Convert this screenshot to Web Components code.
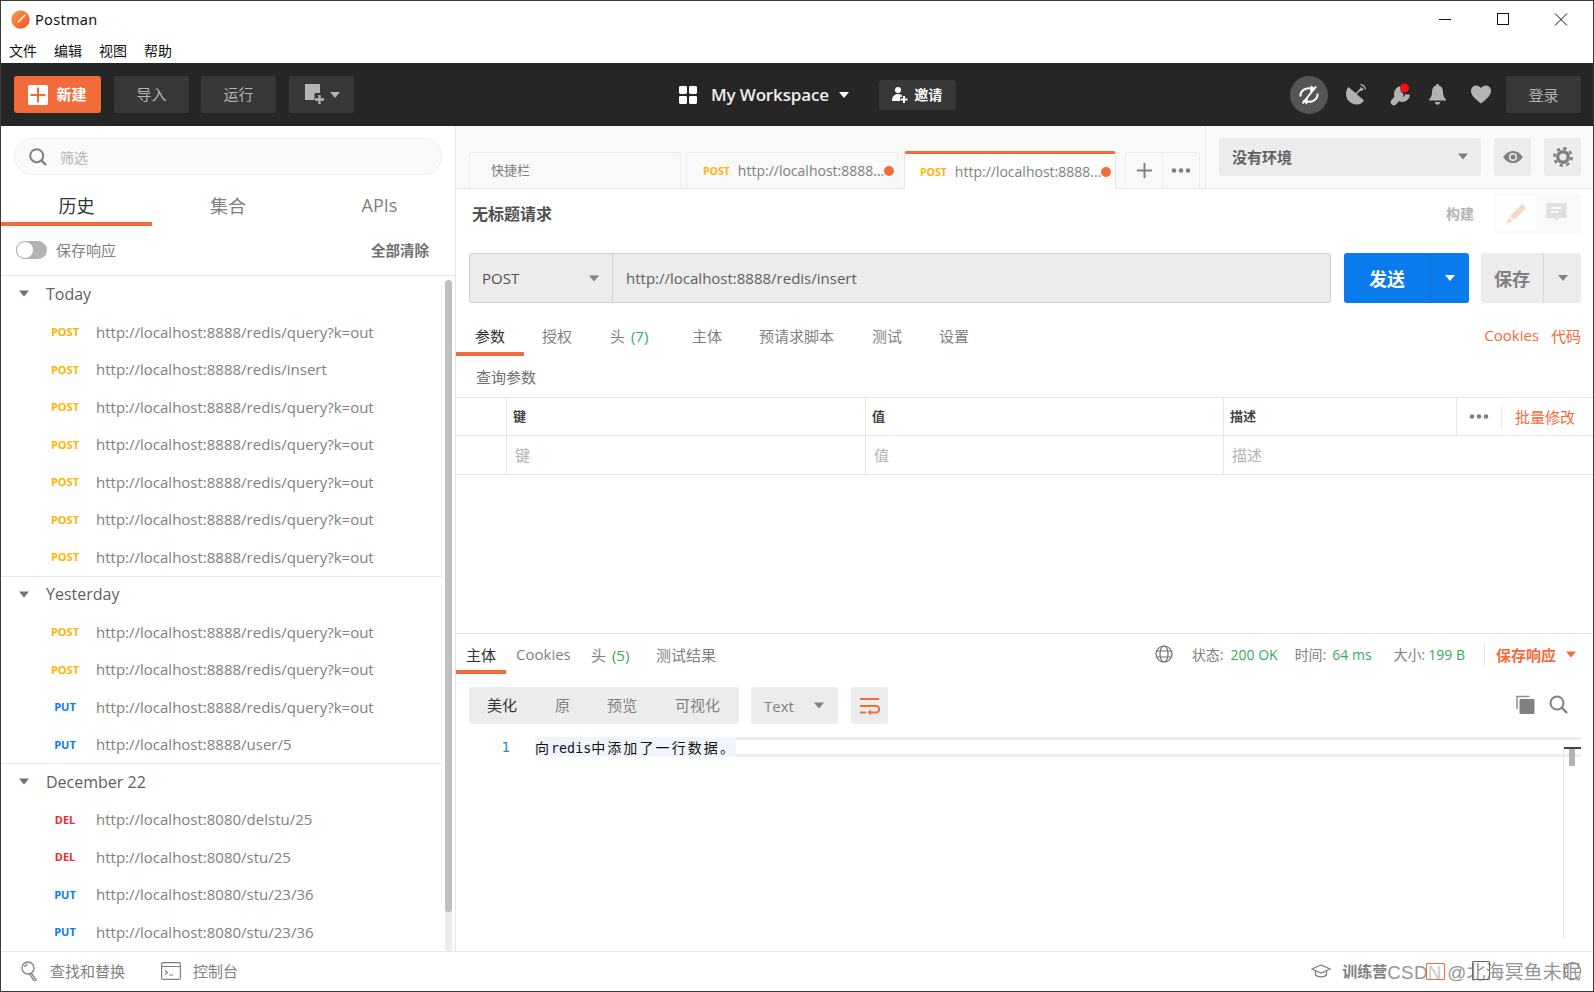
<!DOCTYPE html>
<html lang="zh">
<head>
<meta charset="utf-8">
<title>Postman</title>
<style>
  html, body { margin: 0; padding: 0; background: #fff; }
  body { font-family: "Open Sans", "Noto Sans CJK SC", sans-serif; }
</style>
</head>
<body>
<pm-window>
  <pm-titlebar slot="top"></pm-titlebar>
  <pm-toolbar slot="top"></pm-toolbar>
  <pm-sidebar slot="side">
    <pm-history-group label="Today" first>
      <pm-history-row method="POST">http://localhost:8888/redis/query?k=out</pm-history-row>
      <pm-history-row method="POST">http://localhost:8888/redis/insert</pm-history-row>
      <pm-history-row method="POST">http://localhost:8888/redis/query?k=out</pm-history-row>
      <pm-history-row method="POST">http://localhost:8888/redis/query?k=out</pm-history-row>
      <pm-history-row method="POST">http://localhost:8888/redis/query?k=out</pm-history-row>
      <pm-history-row method="POST">http://localhost:8888/redis/query?k=out</pm-history-row>
      <pm-history-row method="POST">http://localhost:8888/redis/query?k=out</pm-history-row>
    </pm-history-group>
    <pm-history-group label="Yesterday">
      <pm-history-row method="POST">http://localhost:8888/redis/query?k=out</pm-history-row>
      <pm-history-row method="POST">http://localhost:8888/redis/query?k=out</pm-history-row>
      <pm-history-row method="PUT">http://localhost:8888/redis/query?k=out</pm-history-row>
      <pm-history-row method="PUT">http://localhost:8888/user/5</pm-history-row>
    </pm-history-group>
    <pm-history-group label="December 22" last>
      <pm-history-row method="DEL">http://localhost:8080/delstu/25</pm-history-row>
      <pm-history-row method="DEL">http://localhost:8080/stu/25</pm-history-row>
      <pm-history-row method="PUT">http://localhost:8080/stu/23/36</pm-history-row>
      <pm-history-row method="PUT">http://localhost:8080/stu/23/36</pm-history-row>
    </pm-history-group>
  </pm-sidebar>
  <pm-tabstrip slot="main"></pm-tabstrip>
  <pm-request slot="main"></pm-request>
  <pm-response slot="main"></pm-response>
  <pm-statusbar slot="bottom"></pm-statusbar>
</pm-window>

<script>
// all elements share the same small base: markup + style into an open shadow root
class PmElement extends HTMLElement {
  constructor() {
    super();
    this.attachShadow({ mode: "open" });
  }
  connectedCallback() {
    this.shadowRoot.innerHTML = `<style>${this.styles()}</style>${this.markup()}`;
  }
  styles() { return ""; }
  markup() { return ""; }
}

const CARET = (color, w = 12, h = 7) =>
  `<svg width="${w}" height="${h}" viewBox="0 0 12 7" style="display:block;flex:none"><path d="M0 0h12L6 7z" fill="${color}"/></svg>`;

class PmWindow extends PmElement {
  styles() {
    return `
      :host { display: flex; flex-direction: column; width: 1594px; height: 992px; box-sizing: border-box;
        border: 1px solid #3a3a3a; overflow: hidden; background: #fff; }
      .mid { flex: 1; display: flex; min-height: 0; }
      .main { flex: 1; min-width: 0; display: flex; flex-direction: column; }
    `;
  }
  markup() {
    return `<slot name="top"></slot>
      <div class="mid"><slot name="side"></slot><div class="main"><slot name="main"></slot></div></div>
      <slot name="bottom"></slot>`;
  }
}

class PmTitlebar extends PmElement {
  styles() {
    return `
      :host { display: block; background: #fff; color: #111; height: 62px; }
      .title { height: 36px; display: flex; align-items: center; padding-left: 10px; font-size: 14.5px; font-family: "Noto Sans", sans-serif; }
      .title span { margin-left: 5px; letter-spacing: .3px; }
      .ctl { margin-left: auto; margin-right: 3px; display: flex; align-items: center; }
      .ctl svg { display: block; width: 58px; height: 36px; }
      .menu { height: 26px; display: flex; gap: 17px; padding-left: 8px; font-size: 14px; line-height: 26px; font-family: "Noto Sans CJK SC", sans-serif; }
    `;
  }
  markup() {
    return `<div class="title">
        <svg width="19" height="19" viewBox="0 0 19 19">
          <defs><linearGradient id="lg" x1="0" y1="0" x2="1" y2="1"><stop offset="0" stop-color="#f8a04a"/><stop offset="1" stop-color="#ef4f26"/></linearGradient></defs>
          <circle cx="9.5" cy="9.5" r="9.2" fill="url(#lg)"/>
          <path d="M13.8 4.2l1 1-6.6 6.8-2 1 1-2.1z" fill="#fff"/>
        </svg>
        <span>Postman</span>
        <div class="ctl">
          <svg viewBox="0 0 58 36"><path d="M23 18.5h12" stroke="#111" stroke-width="1"/></svg>
          <svg viewBox="0 0 58 36"><rect x="23.5" y="12.5" width="11" height="11" fill="none" stroke="#111"/></svg>
          <svg viewBox="0 0 58 36"><path d="M23 12.5l12 12M35 12.5l-12 12" stroke="#111" fill="none"/></svg>
        </div>
      </div>
      <div class="menu"><span>文件</span><span>编辑</span><span>视图</span><span>帮助</span></div>`;
  }
}

class PmToolbar extends PmElement {
  styles() {
    return `
      :host { display: flex; align-items: center; height: 63px; background: #262626; box-sizing: border-box; padding: 0 12px 0 13px;
        font-family: "Open Sans", "Noto Sans CJK SC", sans-serif; font-size: 15px; color: #b3b3b3; }
      .btn { height: 37px; background: #383838; border-radius: 3px; display: flex; align-items: center; justify-content: center; box-sizing: border-box; flex: none; }
      .btn span, .plain { line-height: 35px; }
      .new { width: 87px; background: #f26b3a; color: #fff; font-weight: 700; gap: 8px; margin-right: 13px; }
      .plain { width: 75px; margin-right: 12px; }
      .add { width: 65px; gap: 5px; margin-left: 1px; }
      .ws { margin-left: 325px; display: flex; align-items: center; color: #eee; font-size: 17px; font-weight: 600; letter-spacing: -.15px; }
      .ws .t { margin: 0 10px 0 14px; }
      .invite { margin-left: 30px; width: 77px; height: 30px; color: #fff; font-weight: 700; gap: 6px; font-size: 14px; }
      .right { margin-left: auto; display: flex; align-items: center; }
      .sync { width: 38px; height: 38px; border-radius: 50%; background: #555; display: flex; align-items: center; justify-content: center; margin-right: 18px; }
      .ic { display: block; flex: none; }
      .login { width: 75px; margin-left: 15px; }
    `;
  }
  markup() {
    return `
      <div class="btn new"><svg class="ic" width="20" height="20" viewBox="0 0 20 20"><rect width="20" height="20" rx="2" fill="#fff"/><path d="M10 2.5v15M2.5 10h15" stroke="#f26b3a" stroke-width="2.2"/></svg><span>新建</span></div>
      <div class="btn plain">导入</div>
      <div class="btn plain">运行</div>
      <div class="btn add">
        <svg class="ic" width="21" height="21" viewBox="0 0 21 21"><path d="M1 0h15v9h-5.500v7H1z" fill="#b3b3b3"/><path d="M15.500 11v9M11 15.500h9" stroke="#b3b3b3" stroke-width="2.400"/></svg>
        ${CARET("#b3b3b3", 10, 6)}
      </div>
      <div class="ws">
        <svg class="ic" width="18" height="18" viewBox="0 0 18 18" fill="#fff"><rect width="8" height="8" rx="1.4"/><rect x="10" width="8" height="8" rx="1.4"/><rect y="10" width="8" height="8" rx="1.4"/><rect x="10" y="10" width="8" height="8" rx="1.4"/></svg>
        <span class="t">My Workspace</span>
        ${CARET("#fff", 10, 6)}
      </div>
      <div class="btn invite">
        <svg class="ic" width="16" height="17" viewBox="0 0 16 17" fill="#fff"><circle cx="6" cy="4" r="3"/><path d="M0 15c0-5 3-7 6-7 2 0 3 .7 4 1.600V11H8v4z"/><path d="M12 10v7M8.500 13.500h7" stroke="#fff" stroke-width="2"/></svg>
        <span>邀请</span>
      </div>
      <div class="right">
        <div class="sync">
          <svg class="ic" width="20" height="20" viewBox="0 0 20 20" fill="none" stroke="#fff" stroke-width="2">
            <path d="M1.500 11.500C1 6 6.500 2 12.500 3.500"/><path d="M18.500 8.500C19 14 13.500 18 7.500 16.500"/>
            <path d="M12 .2l4.500 4L11 7z" fill="#fff" stroke="none"/><path d="M8 19.800l-4.500-4L9 13z" fill="#fff" stroke="none"/>
            <path d="M3.500 18.500L17 1.500" stroke-width="2"/>
          </svg>
        </div>
        <svg class="ic" width="20" height="21" viewBox="0 0 20 21" style="margin-right:24px" fill="#b3b3b3">
          <path d="M2.500 3L18 16.500A8.800 8.800 0 0 1 11 20.500C5 20.500 0 16 0 10c0-2.700.8-5 2.500-7z"/>
          <path d="M9 11l6-6" stroke="#b3b3b3" stroke-width="1.500"/>
          <path d="M14.500 3.500a3 3 0 0 1 2.500 2.500M14.500 .7a6 6 0 0 1 5 5" stroke="#b3b3b3" stroke-width="1.200" fill="none"/>
          <circle cx="15" cy="5.500" r="1.500"/>
        </svg>
        <svg class="ic" width="21" height="23" viewBox="0 0 21 23" style="margin-right:18px" fill="none">
          <path d="M4 19l6-7" stroke="#b3b3b3" stroke-width="6.500" stroke-linecap="round"/>
          <path d="M17.500 11.500A5.500 5.500 0 1 1 11 5.500" stroke="#b3b3b3" stroke-width="5"/>
          <circle cx="14.500" cy="5" r="4.500" fill="#f01212"/>
        </svg>
        <svg class="ic" width="17" height="21" viewBox="0 0 17 21" style="margin-right:25px" fill="#b3b3b3">
          <path d="M8.500 0c1 0 1.500.7 1.500 1.600C13 2.500 14 5 14 8c0 3.500 1 5.500 3 7.500v1H0v-1C2 13.500 3 11.500 3 8c0-3 1-5.500 4-6.400C7 .7 7.500 0 8.500 0z"/>
          <path d="M6 18h5c0 1.500-1 2.800-2.500 2.800S6 19.500 6 18z"/>
        </svg>
        <svg class="ic" width="20" height="19" viewBox="0 0 21 19" fill="#b3b3b3">
          <path d="M10.500 19C6 15 0 11 0 5.700 0 2.500 2.400 0 5.500 0c2 0 3.800 1 5 2.800C11.700 1 13.500 0 15.500 0 18.600 0 21 2.500 21 5.700 21 11 15 15 10.500 19z"/>
        </svg>
        <div class="btn login">登录</div>
      </div>`;
  }
}

class PmSidebar extends PmElement {
  styles() {
    return `
      :host { display: block; position: relative; width: 455px; flex: none; box-sizing: border-box; border-right: 1px solid #e6e6e6; background: #fff; overflow: hidden;
        font-family: "Open Sans", "Noto Sans CJK SC", sans-serif; }
      .search { margin: 12px 13px 0 13px; height: 37px; width: 428px; box-sizing: border-box; border: 1px solid #ececec; border-radius: 19px; background: #fafafa;
        display: flex; align-items: center; padding-left: 14px; gap: 13px; font-size: 14px; color: #b3b3b3; }
      .tabs { display: grid; grid-template-columns: 151px 152px 151px; height: 52px; font-size: 18px; color: #808080; }
      .tabs div { display: flex; align-items: center; justify-content: center; padding-top: 8px; box-sizing: border-box; height: 51px; }
      .tabs .on { color: #333; border-bottom: 4px solid #f26b3a; padding-top: 12px; }
      .opts { height: 50px; margin-top: -1px; box-sizing: border-box; border-bottom: 1px solid #e6e6e6; display: flex; align-items: center; padding: 0 26px 2px 15px; font-size: 15px; color: #808080; }
      .tgl { width: 31px; height: 18px; border-radius: 9px; background: #b3b3b3; box-sizing: border-box; margin-right: 9px; position: relative; }
      .tgl i { position: absolute; left: 1px; top: 1px; width: 16px; height: 16px; border-radius: 50%; background: #fff; box-shadow: 0 0 0 1px #b3b3b3; }
      .clear { margin-left: auto; font-weight: 600; font-size: 14.500px; color: #707070; }
      .bar { position: absolute; right: 3px; top: 154px; width: 7px; height: 671px; background: #ececec; border-radius: 3px; overflow: hidden; }
      .bar i { display: block; height: 632px; background: #c0c0c0; border-radius: 3px; }
    `;
  }
  markup() {
    return `
      <div class="search">
        <svg width="18" height="18" viewBox="0 0 18 18" fill="none" stroke="#808080" stroke-width="2"><circle cx="7.700" cy="7.700" r="6.500"/><path d="M12.500 12.500l4.500 4.500" stroke-width="2.400"/></svg>
        <span>筛选</span>
      </div>
      <div class="tabs"><div class="on">历史</div><div>集合</div><div>APIs</div></div>
      <div class="opts"><span class="tgl"><i></i></span><span>保存响应</span><span class="clear">全部清除</span></div>
      <slot></slot>
      <div class="bar"><i></i></div>`;
  }
}

class PmHistoryGroup extends PmElement {
  styles() {
    return `
      :host { display: block; width: 441px; }
      .wrap { border-bottom: 1px solid #e6e6e6; }
      :host([last]) .wrap { border-bottom: 0; }
      .head { height: 36.250px; padding-bottom: 1px; box-sizing: border-box; display: flex; align-items: center; padding-left: 18px; gap: 17px; font-size: 16px; color: #606060; }
      :host([first]) .head { height: 37px; padding-bottom: 2px; }
      :host([last]) .head { height: 36.750px; }
    `;
  }
  markup() {
    return `<div class="wrap"><div class="head">${CARET("#707070", 10, 7)}<span>${this.getAttribute("label")}</span></div><slot></slot></div>`;
  }
}

class PmHistoryRow extends PmElement {
  styles() {
    return `
      :host { display: flex; align-items: center; height: 37.500px; font-size: 15px; color: #808080; white-space: nowrap; }
      .m { width: 95px; flex: none; padding: 0 2px 0 35px; box-sizing: border-box; text-align: center; font-size: 11px; font-weight: 700; }
      .POST { color: #ffb400; } .PUT { color: #097bed; } .DEL { color: #ed2a2a; }
    `;
  }
  markup() {
    const method = this.getAttribute("method");
    return `<span class="m ${method}">${method}</span><slot></slot>`;
  }
}

class PmTabstrip extends PmElement {
  styles() {
    return `
      :host { display: flex; align-items: flex-end; height: 63px; flex: none; box-sizing: border-box; background: #f9f9f9; border-bottom: 1px solid #e6e6e6; padding-left: 13px;
        font-family: "Open Sans", "Noto Sans CJK SC", sans-serif; font-size: 14px; color: #808080; position: relative; }
      .tab { height: 37px; margin-bottom: -1px; box-sizing: border-box; border: 1px solid #ededed; border-bottom: 1px solid #e6e6e6; border-radius: 3px 3px 0 0; display: flex; align-items: center; margin-right: 6px; white-space: nowrap; }
      .first { width: 212px; padding: 0 0 2px 21px; font-size: 13px; margin-right: 5px; }
      .req { width: 212px; padding-left: 16px; }
      .req b { font-size: 10.500px; color: #ffb400; margin-right: 8px; font-weight: 700; }
      .req .dot { width: 10px; height: 10px; border-radius: 50%; background: #f26b3a; margin-left: auto; margin-right: 5px; flex: none; }
      .on { background: #fff; border: 0; border-top: 3px solid #f26b3a; border-left: 1px solid #e6e6e6; border-right: 1px solid #e6e6e6; height: 38px; padding-left: 15px; }
      .acts { height: 37px; margin-bottom: -1px; margin-left: 3px; box-sizing: border-box; border: 1px solid #ededed; border-radius: 3px 3px 0 0; display: flex; width: 75px; }
      .acts div { flex: 1; display: flex; align-items: center; justify-content: center; }
      .acts div + div { border-left: 1px solid #ededed; }
      .env { margin-left: auto; height: 62px; width: 388px; flex: none; box-sizing: border-box; border-left: 1px solid #e6e6e6; padding: 12px 12px 0 13px; display: flex; align-self: flex-start; }
      .sel { width: 262px; height: 38px; box-sizing: border-box; background: #ececec; border-radius: 3px; display: flex; align-items: center; padding: 0 13px 2px; font-weight: 700; font-size: 15px; color: #606060; }
      .sel svg { margin-left: auto; }
      .sq { width: 37px; height: 38px; background: #ececec; border-radius: 3px; margin-left: 13px; display: flex; align-items: center; justify-content: center; flex: none; }
    `;
  }
  markup() {
    return `
      <div class="tab first">快捷栏</div>
      <div class="tab req"><b>POST</b><span>http://localhost:8888...</span><i class="dot"></i></div>
      <div class="tab req on"><b>POST</b><span>http://localhost:8888...</span><i class="dot"></i></div>
      <div class="acts">
        <div><svg width="15" height="15" viewBox="0 0 15 15"><path d="M7.500 0v15M0 7.500h15" stroke="#808080" stroke-width="2"/></svg></div>
        <div><svg width="20" height="5" viewBox="0 0 20 5" fill="#808080"><circle cx="3" cy="2.500" r="2.300"/><circle cx="10" cy="2.500" r="2.300"/><circle cx="17" cy="2.500" r="2.300"/></svg></div>
      </div>
      <div class="env">
        <div class="sel"><span>没有环境</span>${CARET("#808080", 10, 7)}</div>
        <div class="sq"><svg width="20" height="12" viewBox="0 0 20 12"><path d="M0 6C3 2 6 0 10 0s7 2 10 6c-3 4-6 6-10 6S3 10 0 6z" fill="#808080"/><circle cx="10" cy="6" r="4" fill="#ececec"/><circle cx="10" cy="6" r="2.500" fill="#808080"/></svg></div>
        <div class="sq"><svg width="20" height="20" viewBox="0 0 20 20"><circle cx="10" cy="10" r="8.600" fill="none" stroke="#808080" stroke-width="2.600" stroke-dasharray="3.400 3.350"/><circle cx="10" cy="10" r="5.300" fill="none" stroke="#808080" stroke-width="3.400"/></svg></div>
      </div>`;
  }
}

class PmRequest extends PmElement {
  styles() {
    return `
      :host { display: block; height: 444px; flex: none; box-sizing: border-box; font-family: "Open Sans", "Noto Sans CJK SC", sans-serif; font-size: 15px; color: #808080; }
      .name { height: 48px; display: flex; align-items: center; padding: 0 12px 0 16px; }
      .name b { font-size: 16px; font-weight: 600; color: #505050; }
      .build { margin-left: auto; font-size: 14px; font-weight: 700; color: #b3b3b3; margin-right: 20px; }
      .seg { width: 87px; height: 40px; background: #f9f9f9; border-radius: 3px; display: flex; box-sizing: border-box; padding: 3px 2px; }
      .seg div { width: 40px; height: 35px; display: flex; align-items: center; justify-content: center; border-radius: 3px; }
      .seg .w { background: #fff; }
      .url { display: flex; height: 50px; margin: 16px 12px 0 13px; }
      .in { flex: none; width: 862px; box-sizing: border-box; border: 1px solid #d0d0d0; border-radius: 3px; background: #ececec; display: flex; align-items: center; color: #505050; }
      .meth { width: 143px; height: 100%; box-sizing: border-box; border-right: 1px solid #d0d0d0; display: flex; align-items: center; padding: 0 13px 0 12px; }
      .meth svg { margin-left: auto; }
      .addr { padding-left: 13px; color: #606060; }
      .send { width: 125px; margin-left: 13px; background: #097bed; border-radius: 3px; display: flex; color: #fff; font-weight: 700; font-size: 18px; }
      .send .l { width: 86px; display: flex; align-items: center; justify-content: center; }
      .send .r { flex: 1; border-left: 1px solid #0a6dcf; display: flex; align-items: center; justify-content: center; }
      .save { width: 100px; margin-left: 12px; background: #ececec; border-radius: 3px; display: flex; color: #808080; font-weight: 700; font-size: 18px; }
      .save .l { width: 62px; display: flex; align-items: center; justify-content: center; }
      .save .r { flex: 1; border-left: 1px solid #d8d8d8; display: flex; align-items: center; justify-content: center; }
      .tabs { position: relative; display: flex; height: 38px; margin-top: 14px; align-items: center; }
      .tabs span { position: absolute; top: 8px; white-space: nowrap; }
      .tabs .on { color: #333; }
      .tabs u { position: absolute; left: 0; bottom: -1px; width: 68px; height: 4px; background: #f26b3a; }
      .tabs em { font-style: normal; color: #3aa85f; margin-left: 2px; }
      .links { margin-left: auto; color: #f26b3a; display: flex; gap: 12px; padding-right: 12px; padding-bottom: 1px; }
      .q { height: 42px; line-height: 44px; padding-left: 20px; color: #707070; }
      .tbl { border-top: 1px solid #e6e6e6; }
      .tr { display: grid; grid-template-columns: 50px 359px 358px 233px 1fr; border-bottom: 1px solid #e6e6e6; height: 38px; font-size: 13px; }
      .tr > div { display: flex; align-items: center; padding-left: 6px; border-left: 1px solid #e6e6e6; }
      .tr > div:first-child { border-left: 0; }
      .head { height: 37px; color: #404040; font-weight: 600; }
      .head > div { padding-bottom: 3px; box-sizing: border-box; }
      .ph { color: #b3b3b3; font-size: 15px; }
      .ph > div { padding: 0 0 2px 8px; box-sizing: border-box; }
      .tr > div.x { padding: 0; }
      .dots { width: 44px; display: flex; justify-content: center; align-items: center; height: 100%; }
      .bulk { color: #f26b3a; font-size: 15px; font-weight: 400; padding-left: 13px; border-left: 1px solid #ededed; line-height: 24px; }
    `;
  }
  markup() {
    return `
      <div class="name"><b>无标题请求</b><span class="build">构建</span>
        <div class="seg">
          <div class="w"><svg width="21" height="21" viewBox="0 0 21 21" fill="#fad6c8"><path d="M16 1l4 4L8 17l-4-4z"/><path d="M3 14.500l3.500 3.500L0 20.500z"/></svg></div>
          <div><svg width="21" height="21" viewBox="0 0 21 21"><path d="M.5 0h20v15h-7l-3 3-3-3h-7z" fill="#e0e0e0"/><path d="M5 5h11M5 9h7" stroke="#f9f9f9" stroke-width="2"/></svg></div>
        </div>
      </div>
      <div class="url">
        <div class="in"><div class="meth"><span>POST</span>${CARET("#808080", 10, 7)}</div><div class="addr">http://localhost:8888/redis/insert</div></div>
        <div class="send"><div class="l">发送</div><div class="r">${CARET("#fff", 10, 6)}</div></div>
        <div class="save"><div class="l">保存</div><div class="r">${CARET("#808080", 10, 6)}</div></div>
      </div>
      <div class="tabs">
        <span class="on" style="left:19px">参数</span><span style="left:86px">授权</span><span style="left:154px">头 <em>(7)</em></span>
        <span style="left:236px">主体</span><span style="left:303px">预请求脚本</span><span style="left:416px">测试</span><span style="left:483px">设置</span>
        <u></u>
        <div class="links"><a>Cookies</a><a>代码</a></div>
      </div>
      <div class="q">查询参数</div>
      <div class="tbl">
        <div class="tr head"><div></div><div>键</div><div>值</div><div>描述</div>
          <div class="x"><div class="dots"><svg width="20" height="5" viewBox="0 0 20 5" fill="#808080"><circle cx="3" cy="2.500" r="2.300"/><circle cx="10" cy="2.500" r="2.300"/><circle cx="17" cy="2.500" r="2.300"/></svg></div><span class="bulk">批量修改</span></div>
        </div>
        <div class="tr ph"><div></div><div>键</div><div>值</div><div>描述</div><div style="border-left:0"></div></div>
      </div>`;
  }
}

class PmResponse extends PmElement {
  styles() {
    return `
      :host { display: block; flex: 1; min-height: 0; position: relative; box-sizing: border-box; border-top: 1px solid #e6e6e6; font-family: "Open Sans", "Noto Sans CJK SC", sans-serif; font-size: 15px; color: #808080; }
      .bar { display: flex; height: 40px; position: relative; align-items: center; }
      .tabs { display: flex; align-items: center; height: 100%; position: relative; width: 600px; }
      .tabs span { position: absolute; top: 10px; white-space: nowrap; }
      .tabs .on { color: #333; }
      .tabs u { position: absolute; left: 0; bottom: 0; width: 50px; height: 4px; background: #f26b3a; }
      em { font-style: normal; color: #3aa85f; }
      .tabs em { margin-left: 2px; }
      .meta { margin-left: auto; display: flex; align-items: center; padding-right: 17px; font-size: 14px; height: 100%; }
      .meta .k { margin-right: 6px; }
      .meta em { margin-right: 19px; font-size: 14px; }
      .save { border-left: 1px solid #e6e6e6; height: 24px; padding-left: 11px; display: flex; align-items: center; gap: 10px; color: #f26b3a; font-weight: 700; font-size: 15px; }
      .globe { margin-right: 19px; }
      .tools { display: flex; height: 38px; margin: 13px 0 0 13px; align-items: stretch; }
      .g { background: #ececec; border-radius: 3px; display: flex; align-items: center; }
      .fmt { width: 270px; position: relative; height: 37px; }
      .fmt span { position: absolute; top: 7px; white-space: nowrap; }
      .type { width: 87px; margin-left: 12px; height: 37px; padding: 0 14px 0 13px; box-sizing: border-box; }
      .type svg { margin-left: auto; }
      .wrap { width: 37px; height: 37px; margin-left: 13px; justify-content: center; }
      .side { margin-left: auto; display: flex; gap: 14px; padding: 8px 25px 0 0; }
      .code { display: flex; position: relative; height: 20px; margin-top: 12px; margin-right: 12px; align-items: stretch; }
      .num { width: 79px; box-sizing: border-box; text-align: right; padding-right: 25px; color: #2c8ac4; font: 14px/20px "DejaVu Sans Mono", monospace; flex: none; }
      .txt { background: #f0f5fc; color: #111; height: 20px; font: 14px/20px "Noto Sans CJK SC", sans-serif; letter-spacing: 2.100px; white-space: nowrap; display: block; flex: none; }
      .txt span { font: 13.300px/20px "DejaVu Sans Mono", monospace; letter-spacing: 0; }
      .rest { flex: 1; border-top: 3px solid #ececec; border-bottom: 3px solid #ececec; }
      .vline { position: absolute; right: 29px; top: 113px; bottom: 12px; width: 1px; background: #e6e6e6; }
      .thumb { position: absolute; right: 12px; top: 113px; width: 17px; height: 2px; background: #444; }
      .thumb::after { content: ""; position: absolute; left: 5px; top: 2px; width: 6px; height: 17px; background: #b3b3b3; }
    `;
  }
  markup() {
    return `
      <div class="bar">
        <div class="tabs">
          <span class="on" style="left:10px">主体</span><span style="left:60px">Cookies</span><span style="left:135px">头 <em>(5)</em></span><span style="left:200px">测试结果</span>
          <u></u>
        </div>
        <div class="meta">
          <svg class="globe" width="18" height="18" viewBox="0 0 18 18" fill="none" stroke="#707070" stroke-width="1.200"><circle cx="9" cy="9" r="8"/><ellipse cx="9" cy="9" rx="4" ry="8"/><path d="M1.600 6h14.800M1.600 12h14.800"/></svg>
          <span class="k" style="margin-right:7px">状态:</span><em style="margin-right:17px">200 OK</em>
          <span class="k">时间:</span><em style="margin-right:22px">64 ms</em>
          <span class="k" style="margin-right:3px">大小:</span><em>199 B</em>
          <div class="save"><span>保存响应</span>${CARET("#f26b3a", 10, 7)}</div>
        </div>
      </div>
      <div class="tools">
        <div class="g fmt">
          <span style="left:18px;color:#333">美化</span><span style="left:86px">原</span><span style="left:138px">预览</span><span style="left:206px">可视化</span>
        </div>
        <div class="g type"><span>Text</span>${CARET("#808080", 10, 7)}</div>
        <div class="g wrap"><svg width="21" height="18" viewBox="0 0 21 18" fill="none" stroke="#f26b3a" stroke-width="2"><path d="M1 2h19M1 9h16a3 3 0 0 1 0 6.500h-6M1 15.500h6"/><path d="M12 12.300v6l-3.500-3z" fill="#f26b3a" stroke="none"/></svg></div>
        <div class="side">
          <svg width="19" height="19" viewBox="0 0 19 19"><path d="M1 14V1.500h12.500" fill="none" stroke="#909090" stroke-width="1.500"/><rect x="3.500" y="4" width="15" height="15" rx="1" fill="#808080"/></svg>
          <svg width="19" height="19" viewBox="0 0 19 19" fill="none" stroke="#808080" stroke-width="2"><circle cx="8" cy="8" r="6.500"/><path d="M13 13l5 5" stroke-width="2.400"/></svg>
        </div>
      </div>
      <div class="code"><div class="num">1</div><div class="txt">向<span>redis</span>中添加了一行数据。</div><div class="rest"></div></div>
      <div class="vline"></div><div class="thumb"></div>`;
  }
}

class PmStatusbar extends PmElement {
  styles() {
    return `
      :host { display: flex; align-items: center; position: relative; height: 40px; flex: none; box-sizing: border-box; border-top: 1px solid #e6e6e6; padding: 0 0 2px 20px; font-family: "Open Sans", "Noto Sans CJK SC", sans-serif; font-size: 15px; color: #808080; }
      .it { display: flex; align-items: center; gap: 12px; margin-right: 36px; }
      .right { margin-left: auto; display: flex; align-items: center; white-space: nowrap; padding-right: 12px; }
      .cam { font-weight: 700; font-size: 15px; margin-left: 11px; color: #808080; }
      .mark { font: 18.800px "Liberation Sans", "Noto Sans CJK SC", sans-serif; color: #949494; letter-spacing: .3px; }
      .box { position: absolute; border: 1px solid; box-sizing: border-box; border-radius: 1px; }
    `;
  }
  markup() {
    return `
      <div class="it">
        <svg width="17" height="20" viewBox="0 0 17 20" fill="none" stroke="#808080" stroke-width="1.300"><circle cx="7" cy="7" r="6"/><path d="M3.500 6a4 4 0 0 1 3-2.500"/><path d="M10 12l5 6.500a1.200 1.200 0 0 1-2 1.200L8.500 13"/></svg>
        <span>查找和替换</span>
      </div>
      <div class="it">
        <svg width="20" height="18" viewBox="0 0 20 18" fill="none" stroke="#808080" stroke-width="1.200"><rect x=".6" y=".6" width="18.800" height="16.800" rx="1.500"/><path d="M.6 4.500h18.800M4 8.500l2.500 2-2.500 2M8 13h4"/></svg>
        <span>控制台</span>
      </div>
      <div class="right">
        <svg width="20" height="14" viewBox="0 0 20 14" fill="none" stroke="#808080" stroke-width="1.300"><path d="M10 1L1 5l9 4 9-4z"/><path d="M4.500 7v4c2 2.500 9 2.500 11 0V7"/></svg>
        <span class="cam">训练营</span><span class="mark">CSDN @北海冥鱼未眠</span>
      </div>
      <i class="box" style="left:1425px;top:11px;width:19px;height:17px;color:#f26b3a;background:rgba(255,255,255,.5)"></i>
      <i class="box" style="left:1471px;top:9px;width:18px;height:19px;color:#666"></i>
      <i class="box" style="left:1563px;top:10px;width:17px;height:18px;color:#777;border-radius:50%"></i>`;
  }
}

customElements.define("pm-window", PmWindow);
customElements.define("pm-titlebar", PmTitlebar);
customElements.define("pm-toolbar", PmToolbar);
customElements.define("pm-sidebar", PmSidebar);
customElements.define("pm-history-group", PmHistoryGroup);
customElements.define("pm-history-row", PmHistoryRow);
customElements.define("pm-tabstrip", PmTabstrip);
customElements.define("pm-request", PmRequest);
customElements.define("pm-response", PmResponse);
customElements.define("pm-statusbar", PmStatusbar);
</script>
</body>
</html>
